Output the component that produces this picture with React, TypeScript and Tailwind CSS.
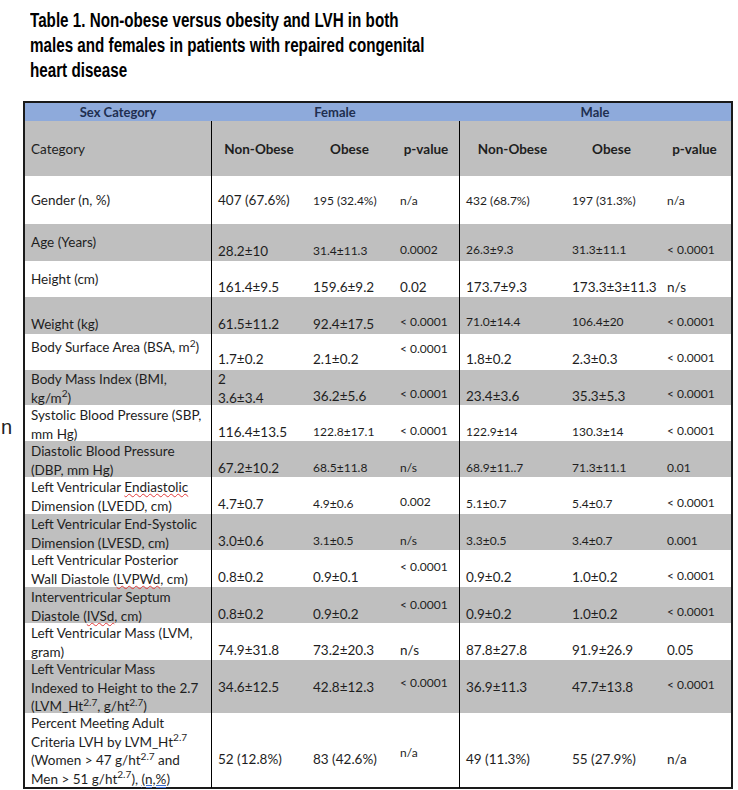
import React from "react";

type V = [React.ReactNode, "L" | "S", string];
type Row = { h: string; gray: boolean; cat: React.ReactNode; cp: string; v: V[] };

const Sq = ({ children }: { children: React.ReactNode }) => (
  <span className="underline decoration-wavy decoration-[#e23b3b] decoration-1 underline-offset-[1px]">{children}</span>
);

const rows: Row[] = [
  { h: "h-[48px]", gray: false, cat: "Gender (n, %)", cp: "pt-[15px]", v: [["407 (67.6%)", "L", "pt-[15px]"], ["195 (32.4%)", "S", "pt-[16px]"], ["n/a", "S", "pt-[16px]"], ["432 (68.7%)", "S", "pt-[16px]"], ["197 (31.3%)", "S", "pt-[16px]"], ["n/a", "S", "pt-[16px]"]] },
  { h: "h-[37px]", gray: true, cat: "Age (Years)", cp: "pt-[9px]", v: [["28.2±10", "L", "pt-[18px]"], ["31.4±11.3", "S", "pt-[18px]"], ["0.0002", "S", "pt-[17px]"], ["26.3±9.3", "S", "pt-[17px]"], ["31.3±11.1", "S", "pt-[17px]"], ["< 0.0001", "S", "pt-[17px]"]] },
  { h: "h-[36px]", gray: false, cat: "Height (cm)", cp: "pt-[9px]", v: [["161.4±9.5", "L", "pt-[17px]"], ["159.6±9.2", "L", "pt-[17px]"], ["0.02", "L", "pt-[17px]"], ["173.7±9.3", "L", "pt-[17px]"], ["173.3±3±11.3", "L", "pt-[17px]"], ["n/s", "L", "pt-[17px]"]] },
  { h: "h-[37px]", gray: true, cat: "Weight (kg)", cp: "pt-[18px]", v: [["61.5±11.2", "L", "pt-[18px]"], ["92.4±17.5", "L", "pt-[18px]"], ["< 0.0001", "S", "pt-[16px]"], ["71.0±14.4", "S", "pt-[16px]"], ["106.4±20", "S", "pt-[16px]"], ["< 0.0001", "S", "pt-[16px]"]] },
  { h: "h-[36px]", gray: false, cat: <>Body Surface Area (BSA, m<sup>2</sup>)</>, cp: "pt-[4px]", v: [["1.7±0.2", "L", "pt-[16px]"], ["2.1±0.2", "L", "pt-[16px]"], ["< 0.0001", "S", "pt-[6px]"], ["1.8±0.2", "L", "pt-[16px]"], ["2.3±0.3", "L", "pt-[16px]"], ["< 0.0001", "S", "pt-[15px]"]] },
  { h: "h-[35px]", gray: true, cat: <>Body Mass Index (BMI,<br />kg/m<sup>2</sup>)</>, cp: "pt-0", v: [[<>2<br />3.6±3.4</>, "L", "pt-0"], ["36.2±5.6", "L", "pt-[17px]"], ["< 0.0001", "S", "pt-[15px]"], ["23.4±3.6", "L", "pt-[17px]"], ["35.3±5.3", "L", "pt-[17px]"], ["< 0.0001", "S", "pt-[15px]"]] },
  { h: "h-[36px]", gray: false, cat: <>Systolic Blood Pressure (SBP,<br />mm Hg)</>, cp: "pt-[1px]", v: [["116.4±13.5", "L", "pt-[18px]"], ["122.8±17.1", "S", "pt-[18px]"], ["< 0.0001", "S", "pt-[17px]"], ["122.9±14", "S", "pt-[18px]"], ["130.3±14", "S", "pt-[18px]"], ["< 0.0001", "S", "pt-[17px]"]] },
  { h: "h-[36px]", gray: true, cat: <>Diastolic Blood Pressure<br />(DBP, mm Hg)</>, cp: "pt-[1px]", v: [["67.2±10.2", "L", "pt-[18px]"], ["68.5±11.8", "S", "pt-[18px]"], ["n/s", "S", "pt-[18px]"], ["68.9±11..7", "S", "pt-[18px]"], ["71.3±11.1", "S", "pt-[18px]"], ["0.01", "S", "pt-[18px]"]] },
  { h: "h-[37px]", gray: false, cat: <>Left Ventricular <Sq>Endiastolic</Sq><br />Dimension (LVEDD, cm)</>, cp: "pt-[1px]", v: [["4.7±0.7", "L", "pt-[18px]"], ["4.9±0.6", "S", "pt-[18px]"], ["0.002", "S", "pt-[16px]"], ["5.1±0.7", "S", "pt-[18px]"], ["5.4±0.7", "S", "pt-[18px]"], ["< 0.0001", "S", "pt-[17px]"]] },
  { h: "h-[36px]", gray: true, cat: <>Left Ventricular End-Systolic<br />Dimension (LVESD, cm)</>, cp: "pt-[1px]", v: [["3.0±0.6", "L", "pt-[18px]"], ["3.1±0.5", "S", "pt-[18px]"], ["n/s", "S", "pt-[18px]"], ["3.3±0.5", "S", "pt-[18px]"], ["3.4±0.7", "S", "pt-[18px]"], ["0.001", "S", "pt-[18px]"]] },
  { h: "h-[37px]", gray: false, cat: <>Left Ventricular Posterior<br />Wall Diastole (<Sq>LVPWd</Sq>, cm)</>, cp: "pt-[1px]", v: [["0.8±0.2", "L", "pt-[18px]"], ["0.9±0.1", "L", "pt-[18px]"], ["< 0.0001", "S", "pt-[8px]"], ["0.9±0.2", "L", "pt-[18px]"], ["1.0±0.2", "L", "pt-[18px]"], ["< 0.0001", "S", "pt-[17px]"]] },
  { h: "h-[36px]", gray: true, cat: <>Interventricular Septum<br />Diastole (<Sq>IVSd</Sq>, cm)</>, cp: "pt-[1px]", v: [["0.8±0.2", "L", "pt-[18px]"], ["0.9±0.2", "L", "pt-[18px]"], ["< 0.0001", "S", "pt-[9px]"], ["0.9±0.2", "L", "pt-[18px]"], ["1.0±0.2", "L", "pt-[18px]"], ["< 0.0001", "S", "pt-[16px]"]] },
  { h: "h-[37px]", gray: false, cat: <>Left Ventricular Mass (LVM,<br />gram)</>, cp: "pt-[1px]", v: [["74.9±31.8", "L", "pt-[18px]"], ["73.2±20.3", "L", "pt-[18px]"], ["n/s", "L", "pt-[18px]"], ["87.8±27.8", "L", "pt-[18px]"], ["91.9±26.9", "L", "pt-[18px]"], ["0.05", "L", "pt-[18px]"]] },
  { h: "h-[53px]", gray: true, cat: <>Left Ventricular Mass<br />Indexed to Height to the 2.7<br />(LVM_Ht<sup>2.7</sup>, g/ht<sup>2.7</sup>)</>, cp: "pt-0", v: [["34.6±12.5", "L", "pt-[18px]"], ["42.8±12.3", "L", "pt-[18px]"], ["< 0.0001", "S", "pt-[14px]"], ["36.9±11.3", "L", "pt-[18px]"], ["47.7±13.8", "L", "pt-[18px]"], ["< 0.0001", "S", "pt-[16px]"]] },
  { h: "h-[74px]", gray: false, cat: <>Percent Meeting Adult<br />Criteria LVH by LVM_Ht<sup>2.7</sup><br />(Women &gt; 47 g/ht<sup>2.7</sup> and<br />Men &gt; 51 g/ht<sup>2.7</sup>), <span className="underline decoration-double decoration-[#3f6fcf] underline-offset-[1px]">(n,%)</span></>, cp: "pt-[1px]", v: [["52 (12.8%)", "L", "pt-[37px]"], ["83 (42.6%)", "L", "pt-[37px]"], ["n/a", "S", "pt-[31px]"], ["49 (11.3%)", "L", "pt-[37px]"], ["55 (27.9%)", "L", "pt-[37px]"], ["n/a", "L", "pt-[37px]"]] },
];

const colPad = ["pl-[6px] border-l border-black", "pl-[7px]", "pl-[7px]", "pl-[6px] border-l border-black", "pl-[7px]", "pl-[9px]"];

export default function App() {
  return (
    <div className="w-[738px] h-[790px] bg-white overflow-hidden text-[#1e1e1e]" style={{ fontFamily: "Lato, 'Open Sans', sans-serif" }}>
      <h1
        className="pl-[30px] pt-[8px] text-[20px] leading-[25px] font-bold text-black whitespace-nowrap"
        style={{ fontFamily: "'Liberation Sans', Arial, sans-serif" }}
      >
        <span className="inline-block origin-left scale-x-[0.76]">
          Table 1. Non-obese versus obesity and LVH in both
          <br />
          males and females in patients with repaired congenital
          <br />
          heart disease
        </span>
      </h1>
      <div className="flex mt-[18px]">
        <div className="w-[23px] shrink-0 pt-[314px] pl-[1px] text-[20px] leading-[24px] text-[#222]" style={{ fontFamily: "'Liberation Sans', Arial, sans-serif" }}>
          n
        </div>
        <div className="w-[710px] border-2 border-[#1a1a1a] leading-[18.5px] text-[13.5px]">
          <div className="grid grid-cols-[186px_248px_272px] h-[18px] bg-[#8eaadb] text-[#1f2f50] font-bold text-[13px] leading-[18px]">
            <div className="text-center">Sex Category</div>
            <div className="text-center">Female</div>
            <div className="text-center">Male</div>
          </div>
          <div className="grid grid-cols-[186px_95px_87px_66px_106px_93px_73px] h-[55px] bg-[#bfbfbf]">
            <div className="pl-[6px] pt-[19px]">Category</div>
            <div className="border-l border-black pt-[19px] text-center font-bold">Non-Obese</div>
            <div className="pt-[19px] text-center font-bold">Obese</div>
            <div className="pt-[19px] text-center font-bold">p-value</div>
            <div className="border-l border-black pt-[19px] text-center font-bold">Non-Obese</div>
            <div className="pt-[19px] text-center font-bold">Obese</div>
            <div className="pt-[19px] text-center font-bold">p-value</div>
          </div>
          {rows.map((r, i) => (
            <div key={i} className={`grid grid-cols-[186px_95px_87px_66px_106px_93px_73px] ${r.h} ${r.gray ? "bg-[#bfbfbf]" : "bg-white"}`}>
              <div className={`pl-[6px] whitespace-nowrap ${r.cp}`}>{r.cat}</div>
              {r.v.map((c, j) => (
                <div key={j} className={`${colPad[j]} ${c[2]} whitespace-nowrap ${c[1] === "S" ? "text-[12px]" : "text-[13.5px]"}`}>
                  {c[0]}
                </div>
              ))}
            </div>
          ))}
        </div>
      </div>
    </div>
  );
}
